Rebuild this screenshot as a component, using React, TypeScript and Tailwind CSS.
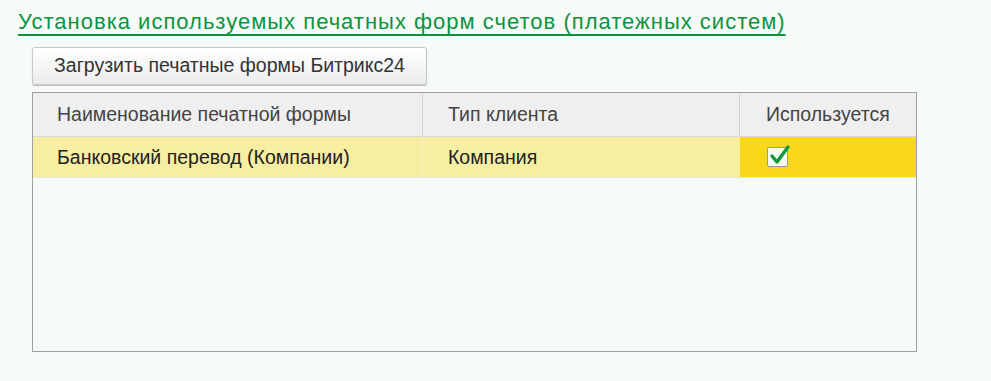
import React from 'react';

// Форма установки печатных форм счетов

const font = { fontFamily: '"Liberation Sans", Arial, sans-serif' };

function CheckMark() {
  return (
    <div className="relative h-[20px] w-[21px] rounded-[2px] border border-[#9a9a9a] bg-[#f7fbf7]">
      <svg
        className="absolute -top-[4px] left-[1px]"
        width="22"
        height="22"
        viewBox="0 0 22 22"
      >
        <path
          d="M3 12 L8 18 L19 3"
          fill="none"
          stroke="#0f9a3e"
          strokeWidth="3.4"
          strokeLinecap="round"
          strokeLinejoin="round"
        />
      </svg>
    </div>
  );
}

export default function App() {
  return (
    <div
      className="h-[381px] w-[991px] bg-[#f7fbf7] text-[#333]"
      style={font}
    >
      <div className="pl-[18px] pt-[8px]">
        <a className="text-[22px] leading-[27px] tracking-[1px] text-[#0b9440] underline decoration-2 underline-offset-[5px]">
          Установка используемых печатных форм счетов (платежных систем)
        </a>
      </div>

      <div className="pl-[32px] pt-[11px]">
        <button className="h-[38px] w-[395px] rounded-[3px] border border-[#c8c8c8] bg-gradient-to-b from-white to-[#ececec] text-[19.5px] text-[#333] shadow-[0_1px_1px_rgba(0,0,0,0.25)]">
          Загрузить печатные формы Битрикс24
        </button>
      </div>

      <div className="ml-[32px] mt-[7px] h-[260px] w-[885px] border border-[#a0a0a0] bg-[#f7fbf7]">
        <div className="flex h-[44px] border-b border-[#d8d8d8] bg-[#efefef] text-[19.5px] text-[#444]">
          <div className="flex w-[390px] items-center border-r border-[#d4d4d4] pl-[24px]">
            Наименование печатной формы
          </div>
          <div className="flex w-[317px] items-center border-r border-[#d4d4d4] pl-[25px]">
            Тип клиента
          </div>
          <div className="flex flex-1 items-center pl-[26px]">Используется</div>
        </div>
        <div className="flex h-[41px] border-b border-[#e0e6e0] text-[19.5px] text-[#222]">
          <div className="flex w-[390px] items-center border-r border-[#fbf5cc] bg-[#f8eea2] pl-[24px] pt-[1px]">
            Банковский перевод (Компании)
          </div>
          <div className="flex w-[317px] items-center bg-[#f8eea2] pl-[25px] pt-[1px]">
            Компания
          </div>
          <div className="flex flex-1 items-center bg-[#f9d81b] pl-[27px]">
            <CheckMark />
          </div>
        </div>
      </div>
    </div>
  );
}
